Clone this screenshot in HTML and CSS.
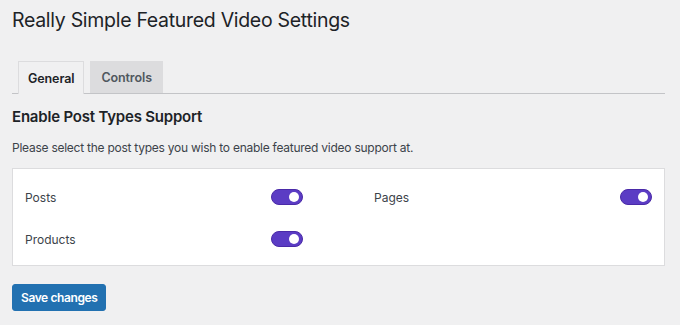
FILE: index.html
```html
<!DOCTYPE html>
<html>
    <head>
        <title>Really Simple Featured Video Settings</title>
        <link rel="stylesheet" href="styles.css">
    </head>
    <body>
        <div class="wrap">
            <h1>Really Simple Featured Video Settings</h1>

            <!-- Settings tabs -->
            <nav class="tabs">
                <a class="tab active" href="#">General</a>
                <a class="tab" href="#">Controls</a>
            </nav>

            <h2>Enable Post Types Support</h2>
            <p class="description">Please select the post types you wish to enable featured video support at.</p>

            <div class="card">
                <div class="option">
                    <span class="label">Posts</span>
                    <span class="toggle on"><span class="knob"></span></span>
                </div>
                <div class="option">
                    <span class="label">Pages</span>
                    <span class="toggle on"><span class="knob"></span></span>
                </div>
                <div class="option">
                    <span class="label">Products</span>
                    <span class="toggle on"><span class="knob"></span></span>
                </div>
            </div>

            <button type="button" class="save-button">Save changes</button>
        </div>
    </body>
</html>
```

FILE: styles.css
```css
body {
    margin: 0;
    background: #f0f0f1;
    font-family: Inter, "Noto Sans", sans-serif;
    color: #1d2327;
}

.wrap {
    padding: 7px 15px 0 12px;
}

h1 {
    margin: 0;
    font-size: 19.5px;
    font-weight: 400;
    line-height: 26px;
    letter-spacing: -0.3px;
    color: #1d2327;
}

/* Tabs */
.tabs {
    display: flex;
    gap: 6px;
    margin-top: 28px;
    padding-left: 6px;
    border-bottom: 1px solid #c3c4c7;
    height: 32px;
}

.tab {
    display: flex;
    align-items: center;
    padding: 0 10px;
    height: 31px;
    font-size: 12.5px;
    font-weight: 600;
    letter-spacing: -0.1px;
    color: #50575e;
    text-decoration: none;
    background: #dcdcde;
    border: 1px solid #dcdcde;
    border-bottom: none;
}

.tab.active {
    padding: 0 9px;
    background: #f0f0f1;
    color: #1d2327;
    height: 32px;
    margin-bottom: -1px;
    border-color: #dcdcde;
}

h2 {
    margin: 13px 0 0;
    font-size: 15px;
    font-weight: 600;
    line-height: 20px;
    letter-spacing: -0.2px;
    color: #1d2327;
}

.description {
    margin: 12px 0 0;
    font-size: 12px;
    line-height: 18px;
    letter-spacing: -0.25px;
    color: #3c434a;
}

/* Card with the post type switches */
.card {
    margin-top: 11px;
    background: #fff;
    border: 1px solid #dcdcde;
    padding: 7px 12px 5px;
    display: grid;
    grid-template-columns: 1fr 1fr;
    column-gap: 71px;
}

.option {
    display: flex;
    align-items: center;
    justify-content: space-between;
    height: 42px;
}

.label {
    font-size: 12px;
    color: #3c434a;
}

.toggle {
    display: flex;
    align-items: center;
    justify-content: flex-end;
    box-sizing: border-box;
    width: 32px;
    height: 16px;
    padding: 0 3px;
    border-radius: 8px;
    background: #5b3cc4;
    border: 1px solid #4a2aa8;
}

.knob {
    width: 10px;
    height: 10px;
    border-radius: 50%;
    background: #fff;
}

.save-button {
    margin-top: 18px;
    height: 27px;
    padding: 0 8px;
    font-family: Inter, "Noto Sans", sans-serif;
    font-size: 12px;
    font-weight: 600;
    letter-spacing: -0.4px;
    color: #fff;
    background: #2271b1;
    border: 1px solid #2271b1;
    border-radius: 3px;
    cursor: pointer;
}
```
